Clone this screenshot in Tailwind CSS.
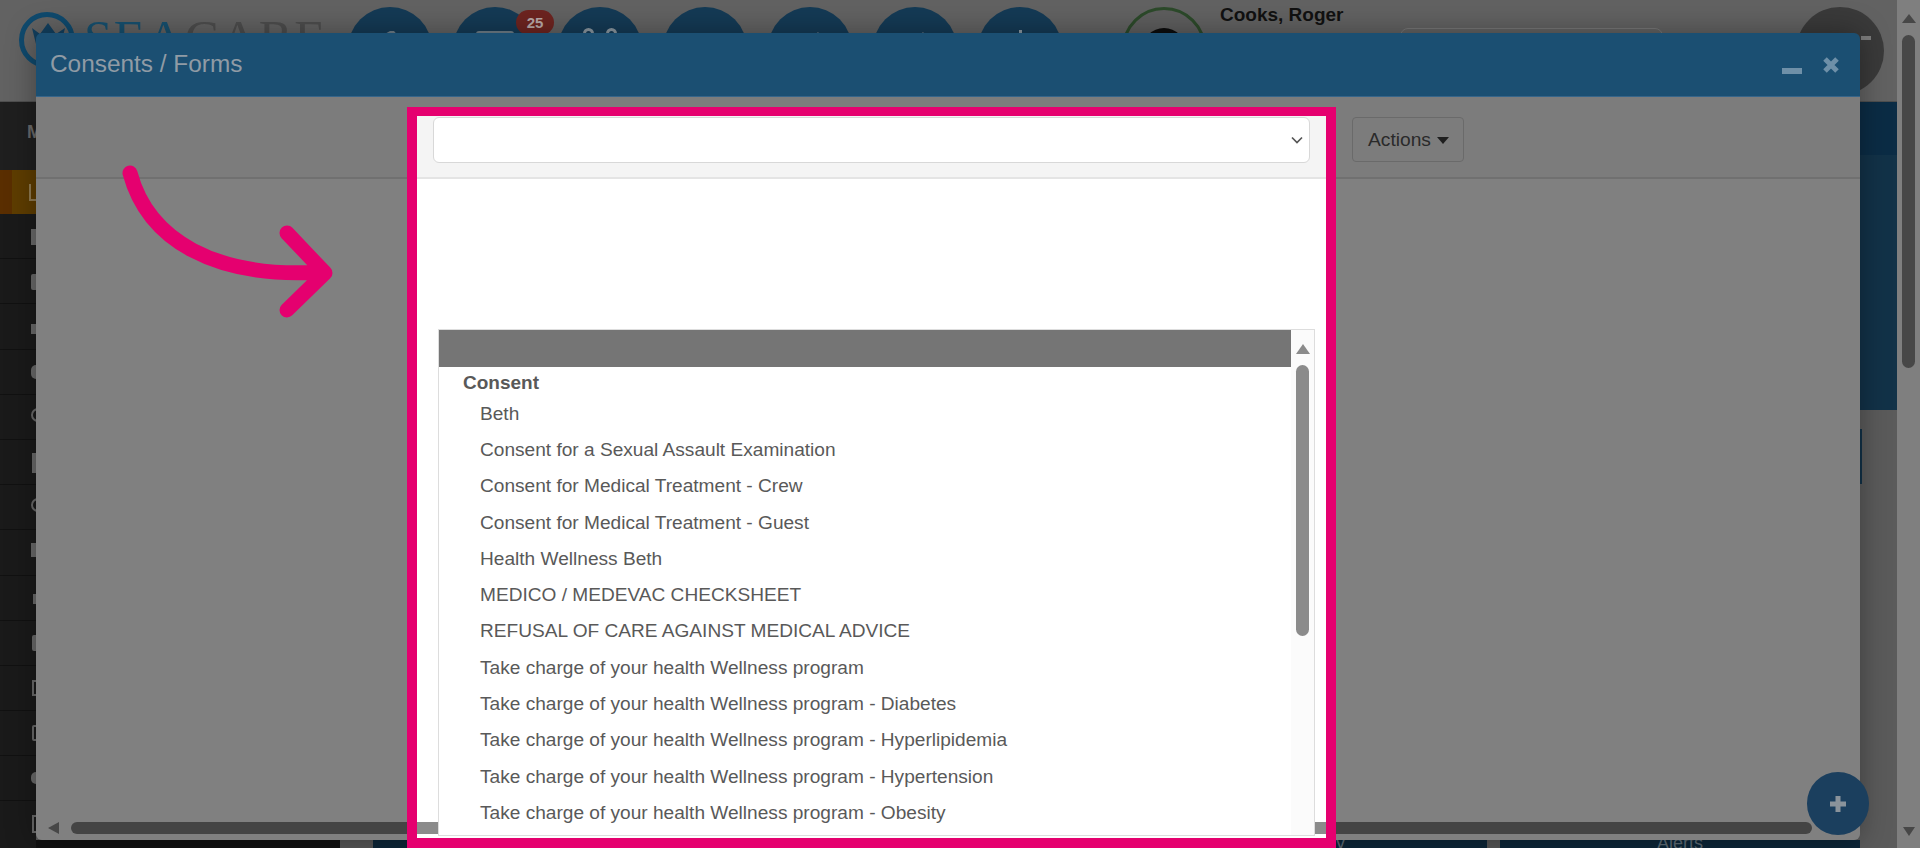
<!DOCTYPE html>
<html lang="en">
  <head>
    <meta charset="utf-8" />
    <meta name="viewport" content="width=device-width, initial-scale=1.0" />
    <title>Consents / Forms</title>
    <script src="https://cdn.jsdelivr.net/npm/@tailwindcss/browser@4"></script>
  </head>
  <body class="bg-[#5b5b5b] font-['Liberation_Sans',Arial,sans-serif]">
    <div class="relative flex w-[1920px] h-[848px] overflow-hidden">
      <!-- Page behind the modal -->
      <div class="flex flex-col w-[1897px] h-full">
        <header class="flex items-start h-[102px] bg-[#626262] border-b border-[#4f4f4f]">
          <div class="flex items-start w-[348px] pl-[18px] pt-[10px]">
            <svg class="w-[60px] h-[60px] shrink-0" viewBox="0 0 60 60">
              <circle cx="29" cy="30" r="25.5" fill="none" stroke="#0f4a6e" stroke-width="5" />
              <path d="M14 18l8 6 8-11 8 11 9-6-5 20H19z" fill="#123f5e" />
            </svg>
            <div class="font-['Liberation_Serif',serif] text-[51px] leading-[60px] tracking-[1.5px] whitespace-nowrap -mt-[2px] ml-[6px]">
              <span class="text-[#16506f]">SEA</span><span class="text-[#4d4d4d]">CARE</span>
            </div>
          </div>
          <div class="flex gap-[21px] pt-[7px]">
            <div class="w-[84px] h-[84px] rounded-full bg-[#143a55] flex justify-center pt-[20px]">
              <svg class="w-[32px] h-[32px]" viewBox="0 0 32 32"><path d="M2 12l14-8h4l10 12H2z" fill="#6f7f8a" /></svg>
            </div>
            <div class="relative w-[84px] h-[84px] rounded-full bg-[#143a55] flex justify-center pt-[24px]">
              <div class="w-[38px] h-[24px] rounded-[3px] bg-[#6f7f8a]"></div>
              <span class="absolute -right-[17px] top-[3px] w-[38px] h-[25px] rounded-full bg-[#6e2420] text-[#b9a9a8] text-[15px] font-bold leading-[25px] text-center">25</span>
            </div>
            <div class="w-[84px] h-[84px] rounded-full bg-[#143a55] flex justify-center gap-[12px] pt-[21px]">
              <div class="w-[11px] h-[11px] rounded-full border-[3px] border-[#8b98a1]"></div>
              <div class="w-[11px] h-[11px] rounded-full border-[3px] border-[#8b98a1]"></div>
            </div>
            <div class="w-[84px] h-[84px] rounded-full bg-[#143a55]"></div>
            <div class="w-[84px] h-[84px] rounded-full bg-[#143a55] flex justify-center pt-[23px]">
              <svg class="w-[32px] h-[12px]" viewBox="0 0 32 12"><path d="M0 12l8-8 8 6 8-8 8 10z" fill="#6f7f8a" /></svg>
            </div>
            <div class="w-[84px] h-[84px] rounded-full bg-[#143a55] flex justify-center pt-[23px]">
              <svg class="w-[32px] h-[12px]" viewBox="0 0 32 12"><path d="M0 12l8-8 8 6 8-8 8 10z" fill="#6f7f8a" /></svg>
            </div>
            <div class="w-[84px] h-[84px] rounded-full bg-[#143a55] flex justify-center pt-[23px]">
              <div class="w-[3px] h-[12px] bg-[#8b98a1]"></div>
            </div>
          </div>
          <div class="ml-[60px] mt-[7px] w-[84px] h-[84px] rounded-full border-[3px] border-[#2c4a2a] flex justify-center pt-[18px] bg-[#5e5e5e]">
            <div class="w-[44px] h-[44px] rounded-full bg-[#0c0c0c]"></div>
          </div>
          <div class="ml-[14px] pt-[4px] text-[#111] w-[180px]">
            <div class="text-[19px] font-bold leading-[22px]">Cooks, Roger</div>
            <div class="text-[14px] leading-[18px] mt-[5px] text-[#2a2a2a]">Age: 1 2000</div>
          </div>
          <div class="ml-0 mt-[28px] w-[263px] h-[40px] rounded-[8px] border border-[#777]"></div>
          <div class="ml-[133px] mt-[7px] w-[88px] h-[88px] rounded-full bg-[#3a3a3a] flex justify-end pt-[29px] pr-[13px]">
            <div class="w-[10px] h-[4px] bg-[#7d7d7d]"></div>
          </div>
        </header>
        <div class="flex flex-1 min-h-0">
          <!-- Side menu -->
          <nav class="w-[36px] shrink-0 flex flex-col bg-[#1a1a1a] overflow-hidden text-[#6a6a6a]">
            <div class="h-[68px] shrink-0 pl-[27px] pt-[20px] text-[18px] font-bold leading-[20px] bg-[#1f1f1f]">M</div>
            <div class="h-[44px] shrink-0 flex bg-[#5e3d00]">
              <div class="w-[12px] bg-[#5a2e00]"></div>
              <div class="ml-[17px] mt-[14px] w-[7px] h-[17px] border-l-2 border-b-2 border-[#8f7a52]"></div>
            </div>
            <div class="h-[45.2px] shrink-0 border-b border-[#111] pl-[31px] pt-[15px]"><div class="w-[8px] h-[16px] bg-[#6a6a6a]"></div></div>
            <div class="h-[45.2px] shrink-0 border-b border-[#111] pl-[31px] pt-[15px]"><div class="w-[8px] h-[16px] rounded-[2px] bg-[#6a6a6a]"></div></div>
            <div class="h-[45.2px] shrink-0 border-b border-[#111] pl-[31px] pt-[20px]"><div class="w-[8px] h-[10px] bg-[#6a6a6a]"></div></div>
            <div class="h-[45.2px] shrink-0 border-b border-[#111] pl-[31px] pt-[15px]"><div class="w-[10px] h-[14px] rounded-full bg-[#6a6a6a]"></div></div>
            <div class="h-[45.2px] shrink-0 border-b border-[#111] pl-[31px] pt-[13px]"><div class="w-[14px] h-[14px] rounded-full border-2 border-[#6a6a6a]"></div></div>
            <div class="h-[45.2px] shrink-0 border-b border-[#111] pl-[32px] pt-[13px]"><div class="w-[8px] h-[20px] bg-[#6a6a6a]"></div></div>
            <div class="h-[45.2px] shrink-0 border-b border-[#111] pl-[31px] pt-[13px]"><div class="w-[14px] h-[14px] rounded-full border-2 border-[#6a6a6a]"></div></div>
            <div class="h-[45.2px] shrink-0 border-b border-[#111] pl-[31px] pt-[13px]"><div class="w-[8px] h-[14px] bg-[#6a6a6a]"></div></div>
            <div class="h-[45.2px] shrink-0 border-b border-[#111] pl-[33px] pt-[18px]"><div class="w-[8px] h-[10px] bg-[#6a6a6a]"></div></div>
            <div class="h-[45.2px] shrink-0 border-b border-[#111] pl-[32px] pt-[14px]"><div class="w-[8px] h-[16px] rounded-[2px] bg-[#6a6a6a]"></div></div>
            <div class="h-[45.2px] shrink-0 border-b border-[#111] pl-[32px] pt-[14px]"><div class="w-[8px] h-[16px] border-2 border-[#6a6a6a]"></div></div>
            <div class="h-[45.2px] shrink-0 border-b border-[#111] pl-[32px] pt-[14px]"><div class="w-[8px] h-[16px] rounded-[2px] border-2 border-[#6a6a6a]"></div></div>
            <div class="h-[45.2px] shrink-0 border-b border-[#111] pl-[31px] pt-[16px]"><div class="w-[10px] h-[12px] rounded-full bg-[#6a6a6a]"></div></div>
            <div class="h-[45.2px] shrink-0 pl-[32px] pt-[14px]"><div class="w-[8px] h-[18px] border-2 border-[#6a6a6a]"></div></div>
          </nav>
          <main class="flex-1 flex flex-col min-w-0">
            <div class="h-[53px] shrink-0 bg-[#0b2c45]"></div>
            <div class="h-[255px] shrink-0 bg-[#123248]"></div>
            <div class="h-[19px] shrink-0 bg-[#5b5b5b]"></div>
            <div class="h-[55px] shrink-0 bg-[#5b5b5b] flex justify-end pr-[35px]"><div class="w-[2px] bg-[#123248]"></div></div>
            <div class="flex-1 bg-[#5b5b5b]"></div>
            <div class="h-[8px] shrink-0 flex text-[18px] leading-[18px] text-[#5d6a74]">
              <div class="w-[304px] bg-[#111]"></div>
              <div class="w-[33px] bg-[#555]"></div>
              <div class="w-[1114px] bg-[#0c2638] text-right overflow-hidden pr-[142px]"><div class="-mt-[6px]">y</div></div>
              <div class="w-[13px] bg-[#555]"></div>
              <div class="w-[360px] bg-[#0c2638] text-center overflow-hidden"><div class="-mt-[6px]">Alerts</div></div>
              <div class="flex-1 bg-[#5b5b5b]"></div>
            </div>
          </main>
        </div>
      </div>

      <!-- Browser scrollbar -->
      <div class="relative flex-1 bg-[#7f7f7f] flex flex-col items-center pt-[14px]">
        <div class="w-0 h-0 border-x-[7px] border-x-transparent border-b-[9px] border-b-[#474747]"></div>
        <div class="mt-[12px] w-[13px] h-[333px] rounded-full bg-[#474747]"></div>
        <div class="absolute bottom-[12px] w-0 h-0 border-x-[6px] border-x-transparent border-t-[9px] border-t-[#474747]"></div>
      </div>

      <!-- Dimmed modal -->
      <div class="absolute left-[36px] top-[33px] w-[1824px] h-[807px] flex flex-col rounded-[6px] overflow-hidden shadow-[0_0_30px_rgba(0,0,0,0.35)]">
        <div class="h-[64px] shrink-0 flex items-center bg-[#1b4f72] border-b border-[#36658a] pl-[14px]">
          <h2 class="text-[24.4px] text-[#909ba5]">Consents / Forms</h2>
          <div class="ml-auto w-[20px] h-[6px] mt-[13px] bg-[#6f90a8]"></div>
          <svg class="ml-[20px] mr-[20px] w-[18px] h-[18px]" viewBox="0 0 18 18">
            <path d="M3 3l12 12M15 3L3 15" stroke="#6f90a8" stroke-width="5" />
          </svg>
        </div>
        <div class="h-[82px] shrink-0 flex items-start bg-[#7c7c7c] border-b-2 border-[#707070] pl-[1316px] pt-[20px]">
          <button class="flex items-center gap-[6px] w-[112px] h-[45px] pl-[15px] pt-[2px] rounded-[4px] border border-[#6a6a6a] text-[19.2px] text-[#2a2a2a]">
            Actions
            <span class="w-0 h-0 border-x-[6px] border-x-transparent border-t-[7px] border-t-[#1f1f1f]"></span>
          </button>
        </div>
        <div class="flex-1 flex items-end bg-[#808080] pl-[12px] pb-[6px]">
          <div class="w-0 h-0 border-y-[6px] border-y-transparent border-r-[11px] border-r-[#474747]"></div>
          <div class="ml-[12px] w-[1741px] h-[12px] rounded-full bg-[#444]"></div>
        </div>
      </div>

      <!-- Floating add button -->
      <button class="absolute left-[1807px] top-[772px] w-[62px] h-[63px] rounded-full bg-[#1b3f5e] flex items-center justify-center">
        <svg class="w-[20px] h-[20px]" viewBox="0 0 20 20"><path d="M10 2v16M2 10h16" stroke="#8a939b" stroke-width="5" /></svg>
      </button>

      <!-- Highlighted area -->
      <div class="absolute left-[407px] top-[107px] w-[929px] h-[741px] border-x-[10px] border-b-[10px] border-t-[9px] border-[#e5006f] bg-white flex flex-col">
        <div class="h-[63px] shrink-0 bg-[#f4f4f4] border-b-2 border-[#e4e4e4] px-[16px] pt-px">
          <div class="relative">
            <select class="block w-full h-[46px] rounded-[6px] border border-[#d8d8d8] bg-white appearance-none text-[18px] text-[#555]">
              <option></option>
            </select>
            <svg class="absolute right-[7px] top-[19px] w-[12px] h-[9px]" viewBox="0 0 12 9"><path d="M1 1.5l5 5 5-5" fill="none" stroke="#555" stroke-width="1.7" /></svg>
          </div>
        </div>
        <div class="relative flex-1 min-h-0 pl-[21px] pr-[11px] pt-[150px]">
          <div class="absolute left-0 top-[643px] w-[21px] h-[12px] bg-[#8b8b8b]"></div>
          <div class="absolute right-0 top-[643px] w-[11px] h-[12px] bg-[#8b8b8b]"></div>
          <div class="flex w-full h-[507px] border border-[#ddd] text-[19.1px] text-[#595959] leading-[36.3px] overflow-hidden">
            <div class="flex-1 min-w-0">
              <div class="h-[37px] bg-[#757575]"></div>
              <ul>
                <li class="pl-[24px] font-bold text-[19px] leading-[32px]">Consent</li>
                <li class="pl-[41px] leading-[30px] mb-[3px]">Beth</li>
                <li class="pl-[41px]">Consent for a Sexual Assault Examination</li>
                <li class="pl-[41px]">Consent for Medical Treatment - Crew</li>
                <li class="pl-[41px]">Consent for Medical Treatment - Guest</li>
                <li class="pl-[41px]">Health Wellness Beth</li>
                <li class="pl-[41px]">MEDICO / MEDEVAC CHECKSHEET</li>
                <li class="pl-[41px]">REFUSAL OF CARE AGAINST MEDICAL ADVICE</li>
                <li class="pl-[41px]">Take charge of your health Wellness program</li>
                <li class="pl-[41px]">Take charge of your health Wellness program - Diabetes</li>
                <li class="pl-[41px]">Take charge of your health Wellness program - Hyperlipidemia</li>
                <li class="pl-[41px]">Take charge of your health Wellness program - Hypertension</li>
                <li class="pl-[41px]">Take charge of your health Wellness program - Obesity</li>
              </ul>
            </div>
            <div class="w-[23px] shrink-0 bg-[#fbfbfb] flex flex-col items-center pt-[14px]">
              <div class="w-0 h-0 border-x-[7px] border-x-transparent border-b-[10px] border-b-[#8b8b8b]"></div>
              <div class="mt-[11px] w-[13px] h-[271px] rounded-full bg-[#8b8b8b]"></div>
            </div>
          </div>
        </div>
      </div>

      <!-- Pointer arrow -->
      <svg class="absolute left-0 top-0 w-[400px] h-[340px] pointer-events-none" viewBox="0 0 400 340">
        <path d="M130 173C148 240 215 279 322 272M287 233l38 40-38 37" fill="none" stroke="#e5006f" stroke-width="15" stroke-linecap="round" stroke-linejoin="round" />
      </svg>
    </div>
  </body>
</html>
